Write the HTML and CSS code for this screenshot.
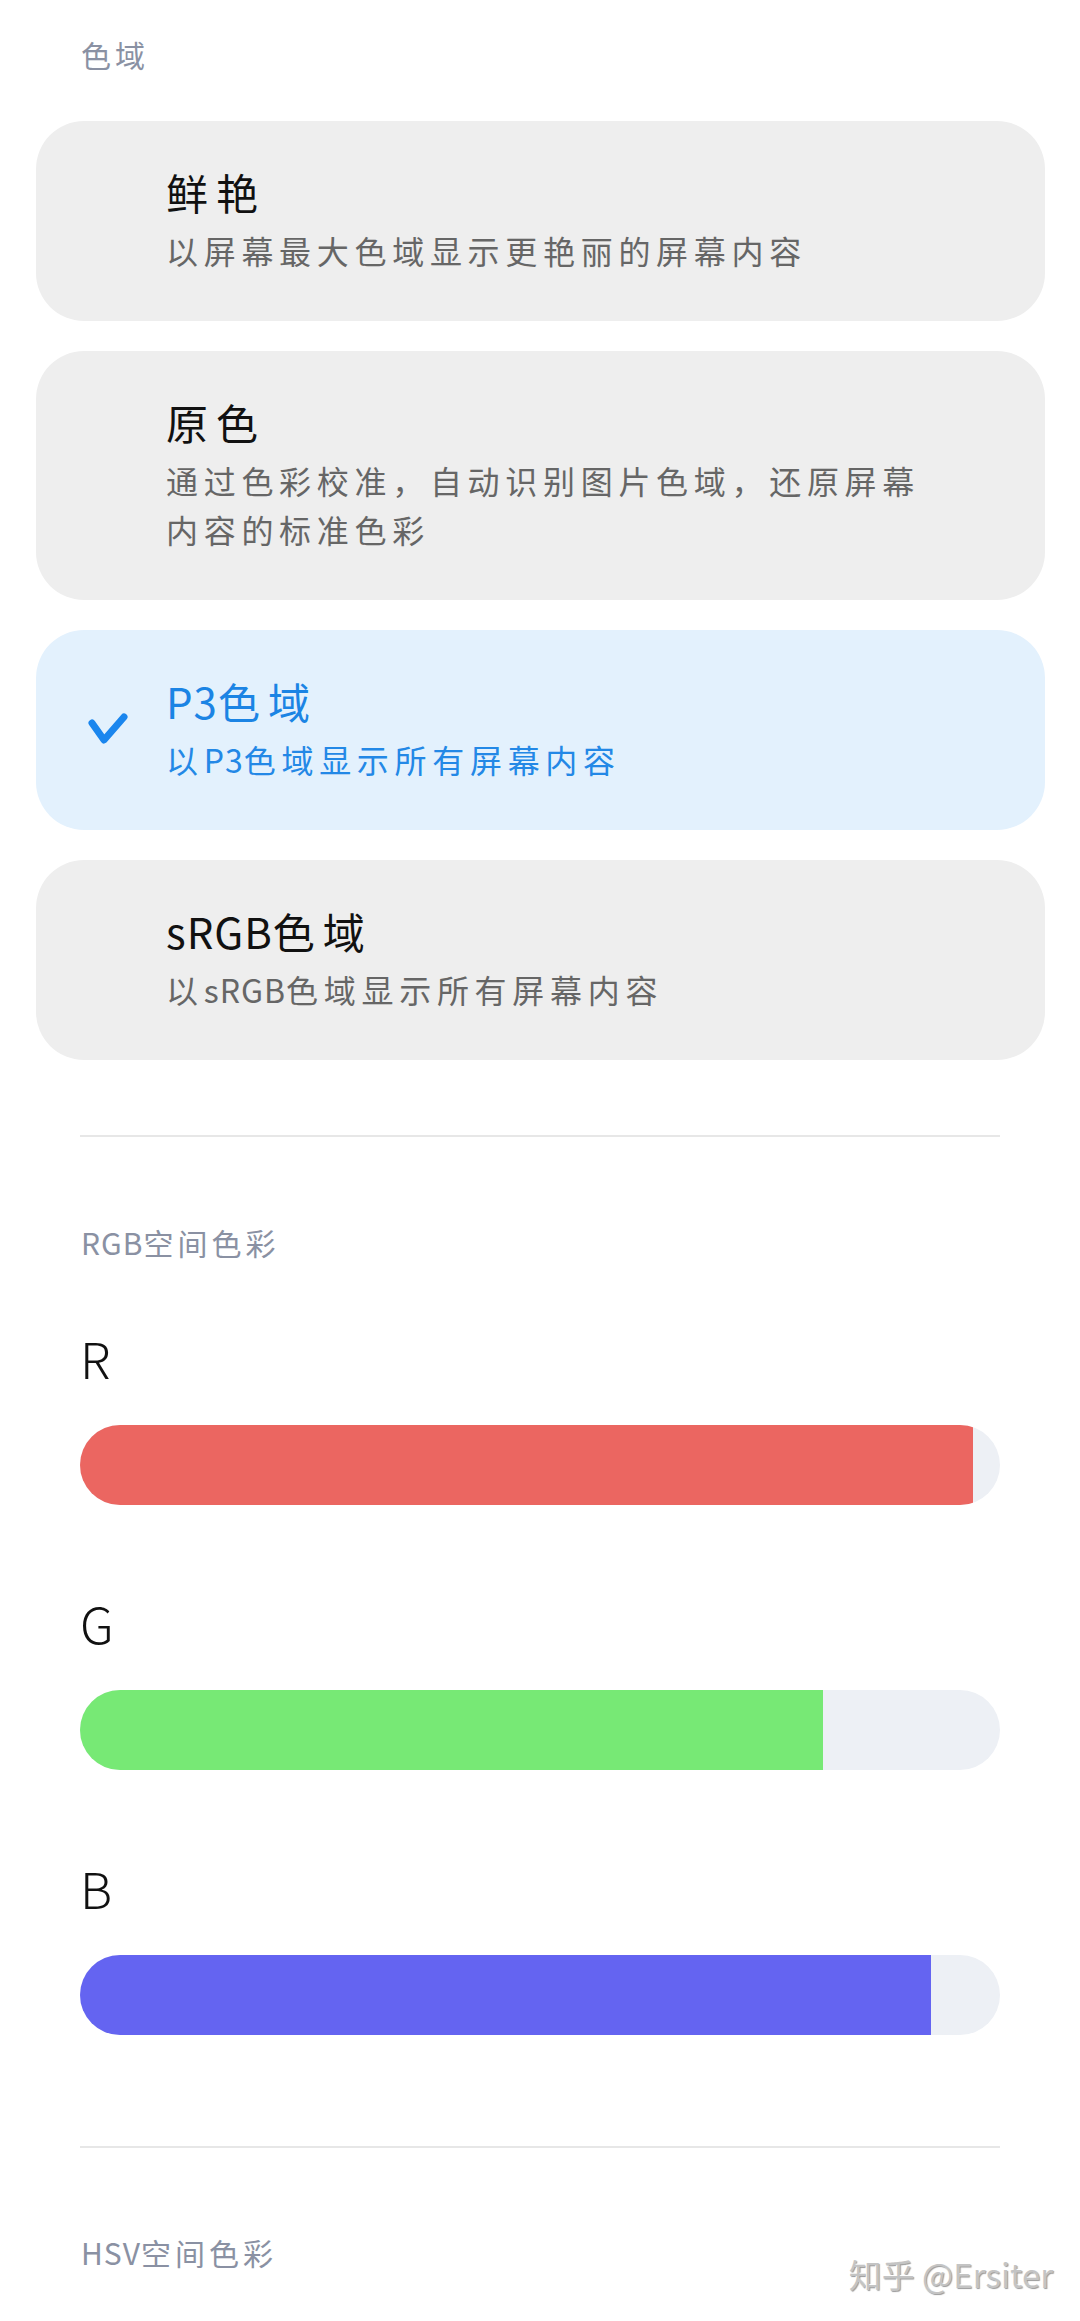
FILE: index.html
```html
<!DOCTYPE html>
<html lang="zh-CN">
<head>
    <meta charset="UTF-8">
    <meta name="viewport" content="width=device-width, initial-scale=1.0">
    <title>屏幕色彩</title>
    <link rel="stylesheet" href="styles.css">
</head>
<body>
    <div class="page">
        <div class="section-title">色域</div>

        <div class="option-list">
            <div class="option">
                <div class="option-icon"></div>
                <div class="option-text">
                    <div class="option-title">鲜艳</div>
                    <div class="option-desc">以屏幕最大色域显示更艳丽的屏幕内容</div>
                </div>
            </div>
            <div class="option">
                <div class="option-icon"></div>
                <div class="option-text">
                    <div class="option-title">原色</div>
                    <div class="option-desc">通过色彩校准，自动识别图片色域，还原屏幕内容的标准色彩</div>
                </div>
            </div>
            <div class="option selected">
                <div class="option-icon">
                    <svg width="42" height="34" viewBox="0 0 42 34">
                        <path d="M5 11 L17 28 L37 5" fill="none" stroke="#1a86ee" stroke-width="7" stroke-linecap="round" stroke-linejoin="round"/>
                    </svg>
                </div>
                <div class="option-text">
                    <div class="option-title"><span class="latin">P3</span>色域</div>
                    <div class="option-desc">以<span class="latin">P3</span>色域显示所有屏幕内容</div>
                </div>
            </div>
            <div class="option">
                <div class="option-icon"></div>
                <div class="option-text">
                    <div class="option-title"><span class="latin">sRGB</span>色域</div>
                    <div class="option-desc">以<span class="latin">sRGB</span>色域显示所有屏幕内容</div>
                </div>
            </div>
        </div>

        <div class="divider"></div>

        <div class="section-title"><span class="latin">RGB</span>空间色彩</div>

        <div class="channel">
            <div class="channel-name">R</div>
            <div class="track"><div class="fill fill-r" style="width: 97.1%"></div></div>
        </div>
        <div class="channel">
            <div class="channel-name">G</div>
            <div class="track"><div class="fill fill-g" style="width: 80.8%"></div></div>
        </div>
        <div class="channel">
            <div class="channel-name">B</div>
            <div class="track"><div class="fill fill-b" style="width: 92.5%"></div></div>
        </div>

        <div class="divider divider-hsv"></div>

        <div class="section-title"><span class="latin">HSV</span>空间色彩</div>

        <div class="watermark">知乎 @Ersiter</div>
    </div>
</body>
</html>
```

FILE: styles.css
```css
body {
    margin: 0;
    padding: 0;
    background-color: #ffffff;
    font-family: "Noto Sans CJK SC", "Noto Sans", sans-serif;
}

.page {
    position: relative;
    min-height: 2321px;
    padding-top: 34px;
    box-sizing: border-box;
}

/* latin runs are set tight, only the CJK glyphs get tracking */
.latin {
    letter-spacing: 1px;
}

.section-title {
    padding: 0 81px;
    font-size: 30px;
    line-height: 40px;
    letter-spacing: 4px;
    color: #8a91a3;
}

.option-list {
    display: flex;
    flex-direction: column;
    gap: 30px;
    margin: 47px 35px 0 36px;
}

.option {
    display: flex;
    align-items: center;
    background: #eeeeee;
    border-radius: 48px;
    padding: 43px 100px 46px 51px;
}

.option-icon {
    flex: 0 0 79px;
    display: flex;
    align-items: center;
}

.option-icon svg {
    display: block;
}

.option-text {
    flex: 1;
}

.option-title {
    font-size: 42px;
    line-height: 56px;
    letter-spacing: 8px;
    color: #111111;
}

.option-desc {
    margin-top: 6px;
    font-size: 32px;
    line-height: 49px;
    letter-spacing: 5.7px;
    color: #666666;
}

.option.selected {
    background: #e3f1fd;
}

.option.selected .option-title {
    color: #1b84e4;
}

.option.selected .option-desc {
    color: #2388e6;
}

.divider {
    height: 2px;
    margin: 75px 80px 85px;
    background: #e7e7e7;
}

.divider-hsv {
    margin-top: 111px;
    margin-bottom: 84px;
}

.channel {
    margin: 65px 80px 0;
}

.channel + .channel {
    margin-top: 87px;
}

.channel-name {
    font-size: 50px;
    line-height: 60px;
    font-weight: 300;
    color: #111111;
}

.track {
    margin-top: 38px;
    height: 80px;
    border-radius: 40px;
    background: #edf0f5;
    overflow: hidden;
}

.fill {
    height: 100%;
}

.fill-r {
    background: #eb6661;
}

.fill-g {
    background: #77e975;
}

.fill-b {
    background: #6464f1;
}

.watermark {
    position: absolute;
    right: 27px;
    top: 2252px;
    font-size: 33px;
    line-height: 44px;
    color: #c4c4c4;
    text-shadow: -1px -1px 0 #ffffff, 1px 1px 1px #9a9a9a;
}
```
